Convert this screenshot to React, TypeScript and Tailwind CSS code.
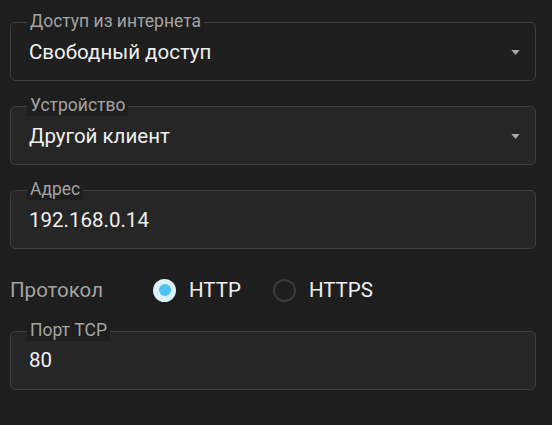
const font = { fontFamily: "Roboto, 'Noto Sans', sans-serif" };

interface FieldProps {
  label: string;
  value: string;
  select?: boolean;
  filled?: boolean;
}

const Field = ({ label, value, select, filled }: FieldProps) => (
  <div
    className={`relative mx-[10px] h-[59px] rounded-[5px] border border-[#3d3d3d] ${
      filled ? "bg-[#262626]" : "bg-[#1f1f1f]"
    }`}
  >
    <span className="absolute -top-[13px] left-[16px] bg-[#1e1e1e] px-[3px] text-[17.5px] leading-[22px] text-[#a3a3a3]">
      {label}
    </span>
    <div className="flex h-full items-center pl-[18px] pr-[15px] pt-[1px] text-[20.5px] text-[#f0f0f0]">
      <span className="flex-1">{value}</span>
      {select && (
        <svg width="9" height="5" viewBox="0 0 10 6" className="mt-[1px]">
          <path d="M0 0h10L5 6z" fill="#a8a8a8" />
        </svg>
      )}
    </div>
  </div>
);

const Radio = ({ checked, label }: { checked?: boolean; label: string }) => (
  <div className="flex items-center gap-[13px]">
    {checked ? (
      <span className="flex h-[23px] w-[23px] items-center justify-center rounded-full bg-[#dbf2fc]">
        <span className="h-[12px] w-[12px] rounded-full bg-[#4cc2f2]" />
      </span>
    ) : (
      <span className="h-[23px] w-[23px] rounded-full border-2 border-[#3a3a3a]" />
    )}
    <span className="text-[20.5px] text-[#f0f0f0]">{label}</span>
  </div>
);

export default function App() {
  return (
    <div className="h-[425px] w-[552px] bg-[#1e1e1e] pt-[22px]" style={font}>
      <div className="mr-[6px] flex flex-col gap-[25px]">
        <Field label="Доступ из интернета" value="Свободный доступ" select />
        <Field label="Устройство" value="Другой клиент" select filled />
        <Field label="Адрес" value="192.168.0.14" filled />
      </div>
      <div className="flex items-center pl-[10px] pt-[26px] pb-[25px]">
        <span className="w-[143px] text-[20.5px] text-[#a3a3a3]">Протокол</span>
        <div className="flex items-center gap-[32px]">
          <Radio checked label="HTTP" />
          <Radio label="HTTPS" />
        </div>
      </div>
      <div className="mr-[6px]">
        <Field label="Порт TCP" value="80" filled />
      </div>
    </div>
  );
}
